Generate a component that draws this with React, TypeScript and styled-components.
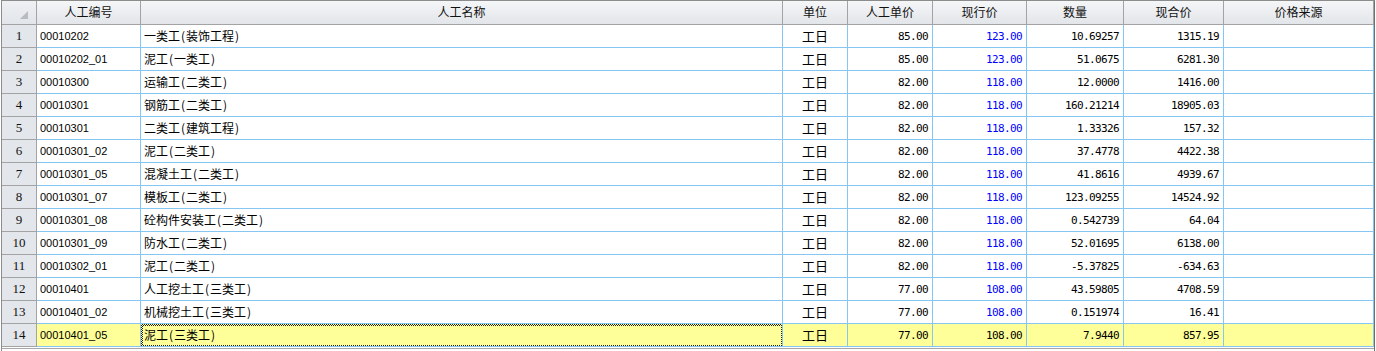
import React from 'react';
import styled, { createGlobalStyle, css } from 'styled-components';

const GlobalStyle = createGlobalStyle`
	html, body {
		margin: 0;
		padding: 0;
		background: #ffffff;
	}
	body {
		font-family: 'Noto Sans CJK SC', 'Liberation Sans', sans-serif;
		font-size: 12px;
		color: #000;
	}
`;

const COLS = '35px 104px 642px 65px 85px 94px 97px 100px 150px';
const BLUE_LINE = '#86c6f2';
const GRAY_LINE = '#a3a3a3';

const Frame = styled.div`
	width: 1372px;
	height: 350px;
	margin-left: 1px;
	border-left: 1px solid #8c8c8c;
	border-top: 1px solid #8c8c8c;
	border-right: 1px solid #6f6f6f;
	overflow: hidden;
	background: #ffffff;
`;

const HeaderRow = styled.div`
	display: grid;
	grid-template-columns: ${COLS};
	height: 24px;
`;

const HeaderCell = styled.div`
	box-sizing: border-box;
	display: flex;
	align-items: center;
	justify-content: center;
	border-right: 1px solid ${GRAY_LINE};
	border-bottom: 1px solid ${GRAY_LINE};
	background: linear-gradient(#f5f6f8, #e2e5e9);
	font-size: 12px;
	color: #111;
	padding-bottom: 2px;
`;

const Corner = styled(HeaderCell)`
	align-items: flex-end;
	justify-content: flex-end;
	padding: 0 8px 5px 0;
	background: linear-gradient(#eef0f3, #e2e5e9);
`;

const CornerMark = styled.span`
	width: 0;
	height: 0;
	border-left: 8px solid transparent;
	border-bottom: 8px solid #b8bcc2;
`;

const Row = styled.div`
	display: grid;
	grid-template-columns: ${COLS};
	height: 23px;
`;

const RowHead = styled.div`
	box-sizing: border-box;
	display: flex;
	align-items: center;
	justify-content: center;
	background: #e3e6ea;
	border-right: 1px solid ${GRAY_LINE};
	border-bottom: 1px solid ${GRAY_LINE};
	font-family: 'Liberation Serif', serif;
	font-size: 13px;
	color: #111;
`;

type CellKind = 'code' | 'text' | 'unit' | 'num';

const Cell = styled.div<{ $kind: CellKind; $blue?: boolean; $hl?: boolean; $selected?: boolean }>`
	position: relative;
	box-sizing: border-box;
	display: flex;
	align-items: center;
	overflow: hidden;
	white-space: nowrap;
	border-right: 1px solid ${BLUE_LINE};
	border-bottom: 1px solid ${BLUE_LINE};
	background: ${(p) => (p.$hl ? '#ffff99' : '#ffffff')};
	color: ${(p) => (p.$blue ? '#0000ff' : '#000000')};

	${(p) =>
		p.$kind === 'code' &&
		css`
			padding-left: 3px;
			font-family: 'Liberation Sans', sans-serif;
			font-size: 11px;
		`}
	${(p) =>
		p.$kind === 'text' &&
		css`
			padding: 0 0 2px 3px;
			font-size: 12px;
		`}
	${(p) =>
		p.$kind === 'unit' &&
		css`
			justify-content: center;
			padding-bottom: 2px;
			font-size: 13px;
		`}
	${(p) =>
		p.$kind === 'num' &&
		css`
			justify-content: flex-end;
			padding-right: 4px;
			font-family: 'DejaVu Sans Mono', monospace;
			font-size: 11px;
			letter-spacing: -0.62px;
		`}

	${(p) =>
		p.$selected &&
		css`
			&::after {
				content: '';
				position: absolute;
				inset: 0 -1px -1px 0;
				padding: 2px;
				background: repeating-conic-gradient(#222 0 25%, transparent 0 50%) 0 0 / 2px 2px;
				-webkit-mask: linear-gradient(#000 0 0) content-box, linear-gradient(#000 0 0);
				-webkit-mask-composite: xor;
				mask-composite: exclude;
			}
		`}
`;

const Paren = styled.span`
	display: inline-block;
	width: 6px;
	text-align: center;
`;

const Footer = styled.div`
	height: 1px;
	margin-top: 1px;
	background: #a8a8a8;
`;

interface LaborItem {
	code: string;
	name: string;
	unit: string;
	price: string;
	current: string;
	qty: string;
	total: string;
}

const items: LaborItem[] = [
	{ code: '00010202', name: '一类工(装饰工程)', unit: '工日', price: '85.00', current: '123.00', qty: '10.69257', total: '1315.19' },
	{ code: '00010202_01', name: '泥工(一类工)', unit: '工日', price: '85.00', current: '123.00', qty: '51.0675', total: '6281.30' },
	{ code: '00010300', name: '运输工(二类工)', unit: '工日', price: '82.00', current: '118.00', qty: '12.0000', total: '1416.00' },
	{ code: '00010301', name: '钢筋工(二类工)', unit: '工日', price: '82.00', current: '118.00', qty: '160.21214', total: '18905.03' },
	{ code: '00010301', name: '二类工(建筑工程)', unit: '工日', price: '82.00', current: '118.00', qty: '1.33326', total: '157.32' },
	{ code: '00010301_02', name: '泥工(二类工)', unit: '工日', price: '82.00', current: '118.00', qty: '37.4778', total: '4422.38' },
	{ code: '00010301_05', name: '混凝土工(二类工)', unit: '工日', price: '82.00', current: '118.00', qty: '41.8616', total: '4939.67' },
	{ code: '00010301_07', name: '模板工(二类工)', unit: '工日', price: '82.00', current: '118.00', qty: '123.09255', total: '14524.92' },
	{ code: '00010301_08', name: '砼构件安装工(二类工)', unit: '工日', price: '82.00', current: '118.00', qty: '0.542739', total: '64.04' },
	{ code: '00010301_09', name: '防水工(二类工)', unit: '工日', price: '82.00', current: '118.00', qty: '52.01695', total: '6138.00' },
	{ code: '00010302_01', name: '泥工(二类工)', unit: '工日', price: '82.00', current: '118.00', qty: '-5.37825', total: '-634.63' },
	{ code: '00010401', name: '人工挖土工(三类工)', unit: '工日', price: '77.00', current: '108.00', qty: '43.59805', total: '4708.59' },
	{ code: '00010401_02', name: '机械挖土工(三类工)', unit: '工日', price: '77.00', current: '108.00', qty: '0.151974', total: '16.41' },
	{ code: '00010401_05', name: '泥工(三类工)', unit: '工日', price: '77.00', current: '108.00', qty: '7.9440', total: '857.95' },
];

const headers = ['人工编号', '人工名称', '单位', '人工单价', '现行价', '数量', '现合价', '价格来源'];

const SELECTED_ROW = 13;

// half-width parentheses in the original take a full 6px cell
const renderName = (name: string): React.ReactNode =>
	name.split(/([()])/).map((part, i) => (part === '(' || part === ')' ? <Paren key={i}>{part}</Paren> : part));

const App: React.FunctionComponent = () => {
	return (
		<>
			<GlobalStyle />
			<Frame>
				<HeaderRow>
					<Corner>
						<CornerMark />
					</Corner>
					{headers.map((h) => (
						<HeaderCell key={h}>{h}</HeaderCell>
					))}
				</HeaderRow>
				{items.map((item, i) => {
					const hl = i === SELECTED_ROW;
					return (
						<Row key={i}>
							<RowHead>{i + 1}</RowHead>
							<Cell $kind='code' $hl={hl}>
								{item.code}
							</Cell>
							<Cell $kind='text' $hl={hl} $selected={hl}>
								<span>{renderName(item.name)}</span>
							</Cell>
							<Cell $kind='unit' $hl={hl}>
								{item.unit}
							</Cell>
							<Cell $kind='num' $hl={hl}>
								{item.price}
							</Cell>
							<Cell $kind='num' $hl={hl} $blue={!hl}>
								{item.current}
							</Cell>
							<Cell $kind='num' $hl={hl}>
								{item.qty}
							</Cell>
							<Cell $kind='num' $hl={hl}>
								{item.total}
							</Cell>
							<Cell $kind='text' $hl={hl} />
						</Row>
					);
				})}
				<Footer />
			</Frame>
		</>
	);
};

export default App;
